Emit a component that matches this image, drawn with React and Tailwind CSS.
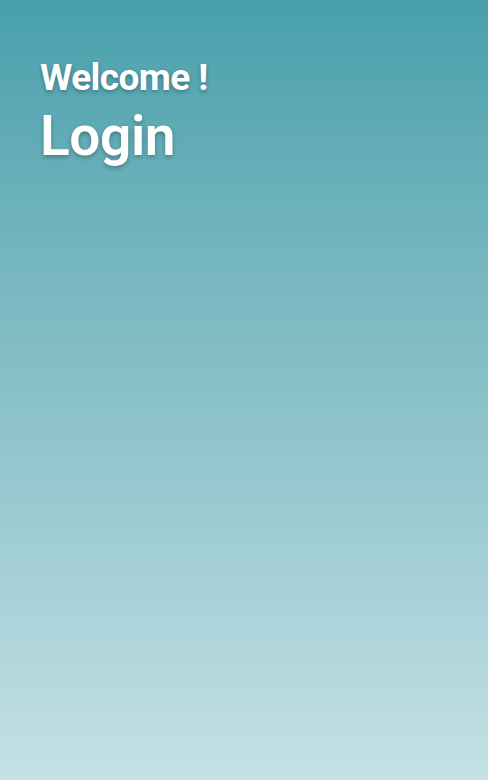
export default function App() {
  return (
    <div className="min-h-[780px] w-full bg-gradient-to-b from-[#48a0ac] to-[#c4e1e5] font-['Roboto',sans-serif] text-white">
      <div className="px-10 pt-[54px]">
        <h2 className="text-[37px] font-bold leading-[48px] tracking-[-0.6px] [text-shadow:0_2px_4px_rgba(0,0,0,0.3)]">
          Welcome !
        </h2>
        <h1 className="mt-[2px] text-[55px] font-semibold leading-[64px] tracking-[-0.4px] [text-shadow:0_2px_4px_rgba(0,0,0,0.3)]">
          Login
        </h1>
      </div>
    </div>
  );
}
